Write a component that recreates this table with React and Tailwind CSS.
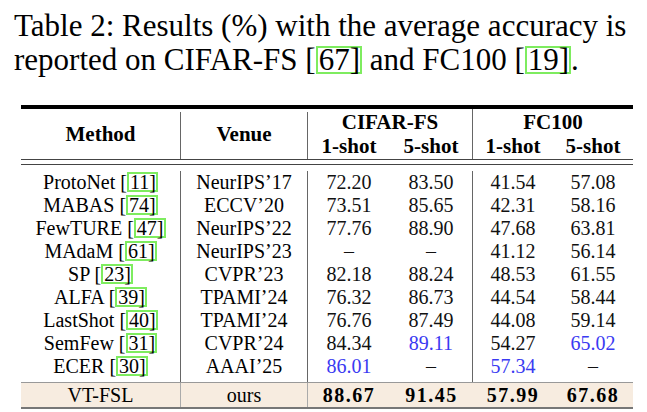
import React from "react";

// results table, values prefixed with * are shown in blue
const rows = [
  ["ProtoNet", "11", "NeurIPS’17", "72.20", "83.50", "41.54", "57.08"],
  ["MABAS", "74", "ECCV’20", "73.51", "85.65", "42.31", "58.16"],
  ["FewTURE", "47", "NeurIPS’22", "77.76", "88.90", "47.68", "63.81"],
  ["MAdaM", "61", "NeurIPS’23", "–", "–", "41.12", "56.14"],
  ["SP", "23", "CVPR’23", "82.18", "88.24", "48.53", "61.55"],
  ["ALFA", "39", "TPAMI’24", "76.32", "86.73", "44.54", "58.44"],
  ["LastShot", "40", "TPAMI’24", "76.76", "87.49", "44.08", "59.14"],
  ["SemFew", "31", "CVPR’24", "84.34", "*89.11", "54.27", "*65.02"],
  ["ECER", "30", "AAAI’25", "*86.01", "–", "*57.34", "–"],
];

function Cite({ n }) {
  return (
    <span>
      [
      <span className="inline-block h-[20px] border-2 border-[#7eec5f] pl-[1px] leading-[16px]">
        {n}]
      </span>
    </span>
  );
}

function BigCite({ n }) {
  return (
    <span>
      [
      <span className="inline-block h-[28px] border-2 border-[#7eec5f] pl-[1px] leading-[24px]">
        {n}]
      </span>
    </span>
  );
}

function Num({ v }) {
  const blue = v.startsWith("*");
  return <span className={blue ? "text-[#3a3af2]" : "text-[#111]"}>{blue ? v.slice(1) : v}</span>;
}

export default function App() {
  return (
    <div className="w-[647px] h-[412px] bg-white [font-family:Liberation_Serif] text-black overflow-hidden">
      {/* caption */}
      <p className="pl-[14px] pt-[9px] text-[31px] leading-[34px]">
        Table 2: Results (%) with the average accuracy is
        <br />
        reported on CIFAR-FS <BigCite n="67" /> and FC100 <BigCite n="19" />.
      </p>

      {/* table */}
      <div className="ml-[21px] mt-[28px] w-[612px]">
        {/* header */}
        <div className="flex h-[54px] border-t-4 border-black pt-[3px] text-[21px] font-bold">
          <div className="flex w-[160px] items-center justify-center border-r border-[#666] pb-[2px]">Method</div>
          <div className="flex w-[127px] items-center justify-center border-r border-[#666] pb-[2px]">Venue</div>
          <div className="w-[165px] border-r border-[#666] -mt-[3px]">
            <div className="flex h-[25px] items-end justify-center leading-[23px]">CIFAR-FS</div>
            <div className="flex h-[25px] leading-[25px]">
              <div className="w-[82px] text-center">1-shot</div>
              <div className="w-[82px] text-center">5-shot</div>
            </div>
          </div>
          <div className="w-[160px] -mt-[3px]">
            <div className="flex h-[25px] items-end justify-center leading-[23px]">FC100</div>
            <div className="flex h-[25px] leading-[25px]">
              <div className="w-[80px] text-center">1-shot</div>
              <div className="w-[80px] text-center">5-shot</div>
            </div>
          </div>
        </div>

        {/* double rule */}
        <div className="h-[6px] border-y border-[#444]"></div>
        <div className="h-[6px]"></div>

        {/* body */}
        {rows.map((r) => (
          <div key={r[0]} className="flex h-[23px] text-[20px] leading-[23px]">
            <div className="w-[160px] border-r border-[#666] text-center">
              {r[0]} <Cite n={r[1]} />
            </div>
            <div className="w-[127px] border-r border-[#666] text-center">{r[2]}</div>
            <div className="w-[82px] text-center"><Num v={r[3]} /></div>
            <div className="w-[83px] border-r border-[#666] text-center"><Num v={r[4]} /></div>
            <div className="w-[80px] text-center"><Num v={r[5]} /></div>
            <div className="w-[80px] text-center"><Num v={r[6]} /></div>
          </div>
        ))}
        <div className="flex h-[4px]">
          <div className="w-[160px] border-r border-[#666]"></div>
          <div className="w-[127px] border-r border-[#666]"></div>
          <div className="w-[82px]"></div>
          <div className="w-[83px] border-r border-[#666]"></div>
        </div>

        {/* ours */}
        <div className="flex h-[27px] border-t border-b-2 border-t-[#999] border-b-[#777] bg-[#f7ece0] text-[20px] leading-[24px]">
          <div className="w-[160px] border-r border-[#aaa] text-center">VT-FSL</div>
          <div className="w-[127px] border-r border-[#aaa] text-center">ours</div>
          <div className="w-[82px] text-center font-bold tracking-[1.5px]">88.67</div>
          <div className="w-[83px] text-center font-bold tracking-[1.5px]">91.45</div>
          <div className="w-[80px] text-center font-bold tracking-[1.5px]">57.99</div>
          <div className="w-[80px] text-center font-bold tracking-[1.5px]">67.68</div>
        </div>
      </div>
    </div>
  );
}
